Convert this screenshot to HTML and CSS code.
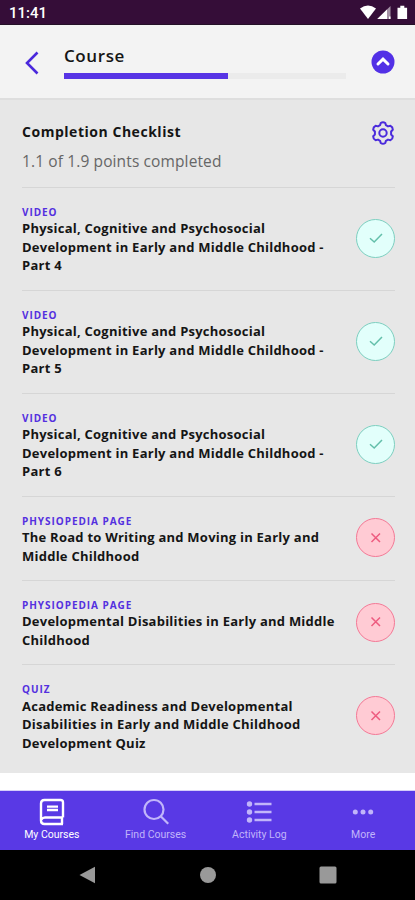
FILE: index.html
```html
<!DOCTYPE html>
<html lang="en">
<head>
<meta charset="utf-8">
<meta name="viewport" content="width=device-width, initial-scale=1">
<title>Course</title>
<link rel="stylesheet" href="styles.css">
</head>
<body>
<div class="status">
  <span class="time">11:41</span>
  <svg width="48" height="16" viewBox="0 0 48 16" fill="#fff"><path d="M0 3.5Q8-2.6 16 3.5L8 14z"/><path d="M17.3 14 30.5 1v13z" opacity=".55"/><path d="M17.3 14 27 4.5V14z"/><path d="M29 11.5h1.5V14H29zM37.5 2.8h2.8V.7h4v2.1h2.8V14h-9.6z"/></svg>
</div>
<header class="header">
  <svg class="back" width="16" height="24" viewBox="0 0 16 24" fill="none" stroke="#4a28dc" stroke-width="2.6"><path d="M13.5 1.5 3 12l10.5 10.500"/></svg>
  <div class="course">
    <h1>Course</h1>
    <div class="progress"><div class="bar"></div></div>
  </div>
  <svg class="up" width="24" height="24" viewBox="0 0 24 24"><circle cx="12" cy="12" r="11.5" fill="#5230e6"/><path d="m7 14 5-4.900 5 4.900" fill="none" stroke="#fff" stroke-width="3" stroke-linecap="round"/></svg>
</header>
<main class="content">
  <section class="summary">
    <div><h2>Completion Checklist</h2><p>1.1 of 1.9 points completed</p></div>
    <svg class="gear" width="24" height="24" viewBox="0 0 24 24" fill="none" stroke="#4b2bdc" stroke-width="2" stroke-linejoin="round"><path d="M9.700 2Q12 .5 14.300 2l.6 2.200 2.100 1.200 2.500-.6q2.400 1.200 2.300 3.900L20.100 10.500v3l1.700 1.800q.1 2.700-2.300 3.900l-2.500-.6-2.100 1.200-.6 2.200Q12 23.500 9.700 22l-.6-2.200L7 18.600l-2.500.6q-2.400-1.200-2.300-3.900l1.700-1.800v-3L2.200 8.700q-.1-2.700 2.300-3.900l2.500.6 2.100-1.200z"/><circle cx="12" cy="12" r="3.700"/></svg>
  </section>
  <article class="item"><div><b class="kind">VIDEO</b><h3>Physical, Cognitive and Psychosocial<br>Development in Early and Middle Childhood -<br>Part 4</h3></div><span class="mark done"><svg width="16" height="16" viewBox="0 0 16 16"><path d="m2 8.200 4.200 3.800L14 4"/></svg></span></article>
  <article class="item"><div><b class="kind">VIDEO</b><h3>Physical, Cognitive and Psychosocial<br>Development in Early and Middle Childhood -<br>Part 5</h3></div><span class="mark done"><svg width="16" height="16" viewBox="0 0 16 16"><path d="m2 8.200 4.200 3.800L14 4"/></svg></span></article>
  <article class="item"><div><b class="kind">VIDEO</b><h3>Physical, Cognitive and Psychosocial<br>Development in Early and Middle Childhood -<br>Part 6</h3></div><span class="mark done"><svg width="16" height="16" viewBox="0 0 16 16"><path d="m2 8.200 4.200 3.800L14 4"/></svg></span></article>
  <article class="item"><div><b class="kind">PHYSIOPEDIA PAGE</b><h3>The Road to Writing and Moving in Early and<br>Middle Childhood</h3></div><span class="mark missing"><svg width="16" height="16" viewBox="0 0 16 16"><path d="m3.500 3.500 8.500 8.500m0-8.500L3.500 12"/></svg></span></article>
  <article class="item"><div><b class="kind">PHYSIOPEDIA PAGE</b><h3>Developmental Disabilities in Early and Middle<br>Childhood</h3></div><span class="mark missing"><svg width="16" height="16" viewBox="0 0 16 16"><path d="m3.500 3.500 8.500 8.500m0-8.500L3.500 12"/></svg></span></article>
  <article class="item"><div><b class="kind">QUIZ</b><h3>Academic Readiness and Developmental<br>Disabilities in Early and Middle Childhood<br>Development Quiz</h3></div><span class="mark missing"><svg width="16" height="16" viewBox="0 0 16 16"><path d="m3.500 3.500 8.500 8.500m0-8.500L3.500 12"/></svg></span></article>
</main>
<nav class="tabs">
  <a class="tab active"><svg width="28" height="28" viewBox="0 0 28 28" fill="none" stroke="currentColor" stroke-width="2.400"><path d="M25 19.500V4.500Q25 2 22.500 2h-16Q3 2 3 5.500v17Q3 26 6.500 26H25M3.500 21.500Q4.500 19.500 7 19.500h18M24 20v6"/><path d="M9 8.600h11M9 12h11"/></svg><span>My Courses</span></a>
  <a class="tab"><svg width="28" height="28" viewBox="0 0 28 28" fill="none" stroke="currentColor" stroke-width="2.200"><circle cx="12" cy="11.500" r="9.500"/><path d="m18.700 18.200 7.500 7.500"/></svg><span>Find Courses</span></a>
  <a class="tab"><svg width="28" height="28" viewBox="0 0 28 28" fill="currentColor"><circle cx="4.500" cy="6" r="2.700"/><circle cx="4.500" cy="14" r="2.700"/><circle cx="4.500" cy="22" r="2.700"/><path d="M9.500 4.800h17v2.400h-17zm0 8h17v2.400h-17zm0 8h17v2.400h-17z"/></svg><span>Activity Log</span></a>
  <a class="tab"><svg width="28" height="28" viewBox="0 0 28 28" fill="currentColor"><circle cx="6.300" cy="14" r="2.500"/><circle cx="14" cy="14" r="2.500"/><circle cx="21.700" cy="14" r="2.500"/></svg><span>More</span></a>
</nav>
<footer class="system">
  <svg width="18" height="18" viewBox="0 0 18 18"><path d="M.5 9 16 .800v16.400z"/></svg>
  <svg width="18" height="18" viewBox="0 0 18 18"><circle cx="9" cy="9" r="8"/></svg>
  <svg width="18" height="18" viewBox="0 0 18 18"><rect x=".5" y=".5" width="17" height="17" rx="1.500"/></svg>
</footer>
</body>
</html>
```
FILE: styles.css
```css
* { box-sizing: border-box; }
body { margin: 0; width: 415px; height: 900px; overflow: hidden; display: flex; flex-direction: column; background: #fff; font-family: "Open Sans", sans-serif; color: #151515; }
h1, h2, h3, p { margin: 0; white-space: nowrap; }
svg { display: block; flex: none; }
.status { height: 25px; flex: none; background: #350d38; border-bottom: 1px solid #241027; display: flex; justify-content: space-between; padding: 5px 7px 0 9px; }
.time { font: 500 15px/17px Roboto, sans-serif; color: #fff; }
.header { height: 75px; flex: none; background: #f3f3f3; border-bottom: 2px solid #dedede; display: flex; padding: 0 20px 0 24px; }
.back { margin-top: 26px; }
.course { width: 282px; margin: 19px 0 0 24px; }
h1 { font-size: 17px; line-height: 24px; font-weight: 600; letter-spacing: .6px; }
.progress { height: 6px; margin-top: 5px; background: #ebebeb; }
.bar { width: 58%; height: 100%; background: #5734e5; }
.up { margin: 25px 0 0 auto; }
.content { height: 673px; flex: none; background: #e7e7e7; padding: 0 20px 0 22px; }
.summary { height: 87px; padding-top: 21px; display: flex; justify-content: space-between; }
h2 { font-size: 14px; line-height: 21px; font-weight: 700; letter-spacing: .53px; }
.summary p { margin-top: 8px; font-size: 15.500px; line-height: 22px; color: #666; letter-spacing: .12px; }
.item { border-top: 1px solid #d6d6d6; padding: 17.900px 0 15px; display: flex; justify-content: space-between; align-items: center; }
.kind { display: block; font-size: 10px; line-height: 13.500px; font-weight: 700; color: #5430df; letter-spacing: .95px; }
h3 { font-size: 13px; line-height: 18.500px; font-weight: 700; letter-spacing: .24px; }
.mark { width: 39px; height: 39px; margin-bottom: 4px; flex: none; border-radius: 50%; display: flex; align-items: center; justify-content: center; }
.mark svg { fill: none; stroke: currentColor; stroke-width: 1.500; }
.done { color: #63bfaa; background: #e2fffb; border: 1px solid #7dcfc0; }
.missing { color: #ed5b7f; background: #ffcbd4; border: 1px solid #f47996; }
.tabs { height: 60px; flex: none; margin-top: 17px; background: #5939e5; border-top: 1px solid #d5cdfa; display: grid; grid-template-columns: repeat(4, 1fr); }
.tab { display: flex; flex-direction: column; align-items: center; padding-top: 7px; color: #c1b5fa; font: 10.500px/14px Roboto, sans-serif; }
.tab span { margin-top: 2px; }
.active { color: #fff; }
.system { height: 50px; flex: none; background: #000; fill: #999; display: flex; justify-content: center; gap: 102px; padding-top: 16px; }
```
